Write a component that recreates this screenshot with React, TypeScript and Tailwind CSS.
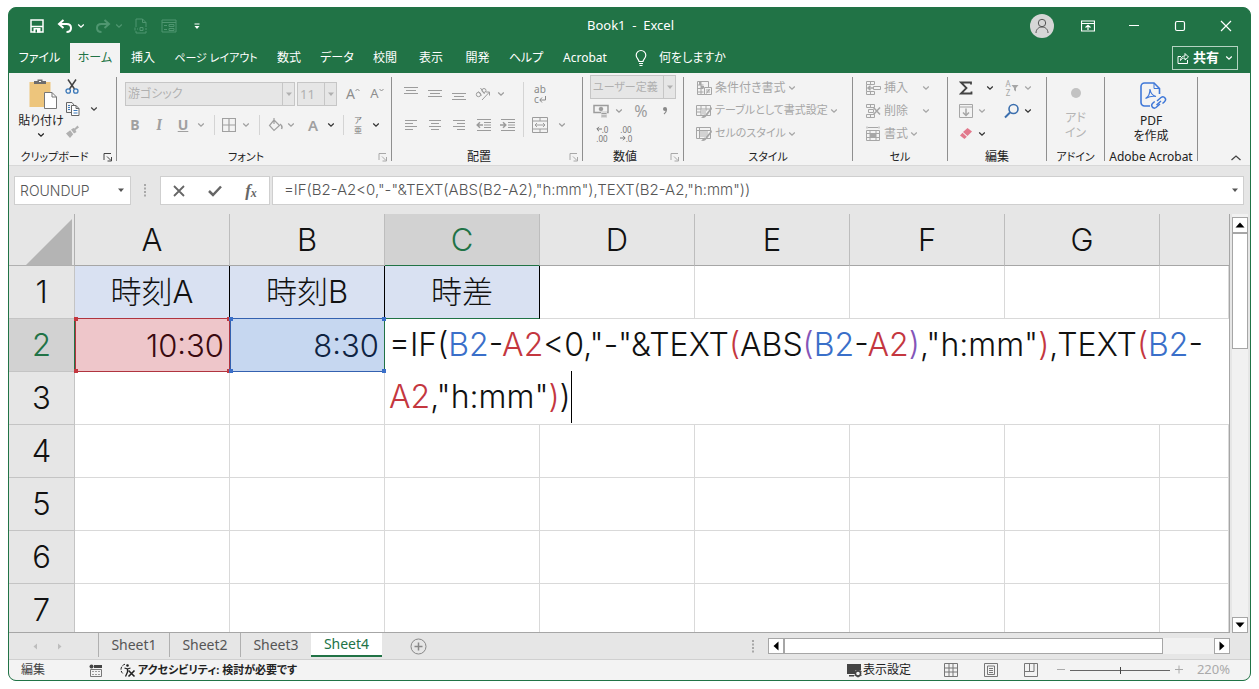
import type { ReactNode } from "react";
import clsx from "clsx";

const FORMULA = '=IF(B2-A2<0,"-"&TEXT(ABS(B2-A2),"h:mm"),TEXT(B2-A2,"h:mm"))';

const tabs = [
    { label: "ファイル", width: "w-[61px]" },
    { label: "ホーム", width: "w-[50px]", active: true },
    { label: "挿入", width: "w-[46px]" },
    { label: "ページ レイアウト", width: "w-[100px]", compact: true },
    { label: "数式", width: "w-[46px]" },
    { label: "データ", width: "w-[50px]" },
    { label: "校閲", width: "w-[46px]" },
    { label: "表示", width: "w-[46px]" },
    { label: "開発", width: "w-[47px]" },
    { label: "ヘルプ", width: "w-[50px]" },
    { label: "Acrobat", width: "w-[68px]" },
];

const columns = ["A", "B", "C", "D", "E", "F", "G", ""];
const emptyRows = [4, 5, 6, 7];
const sheets = ["Sheet1", "Sheet2", "Sheet3", "Sheet4"];

type IconProps = { w?: number; h?: number; className?: string; children: ReactNode };

const Icon = ({ w = 16, h = 16, className, children }: IconProps) => (
    <svg
        width={w}
        height={h}
        viewBox={`0 0 ${w} ${h}`}
        fill="none"
        stroke="currentColor"
        className={clsx("shrink-0", className)}
        aria-hidden="true"
    >
        {children}
    </svg>
);

const Chevron = ({ className }: { className?: string }) => (
    <Icon w={12} h={8} className={className}>
        <path d="M3.2 2.6 6 5.2l2.800-2.600" strokeWidth="1.300" />
    </Icon>
);

const Triangle = ({ className }: { className?: string }) => (
    <Icon w={8} h={5} className={className}>
        <path d="M1 .5h6L4 4z" fill="currentColor" stroke="none" />
    </Icon>
);

const ScrollArrow = ({ className }: { className?: string }) => (
    <Icon w={10} h={6} className={className}>
        <path d="M.5 .5h9L5 5.500z" fill="currentColor" stroke="none" />
    </Icon>
);

const Dots = ({ className }: { className?: string }) => (
    <Icon w={4} h={14} className={className}>
        <path d="M1 1h2v2H1zM1 4.500h2v2H1zM1 8h2v2H1zM1 11.500h2v2H1z" fill="currentColor" stroke="none" />
    </Icon>
);

type ToolProps = { label: string; className?: string; children: ReactNode };

const Tool = ({ label, className, children }: ToolProps) => (
    <button type="button" aria-label={label} className={clsx("flex shrink-0 items-center justify-center", className)}>
        {children}
    </button>
);

const More = ({ label, className }: { label: string; className?: string }) => (
    <Tool label={`${label}のオプション`} className={clsx("w-3", className)}>
        <Chevron />
    </Tool>
);

const Separator = ({ className }: { className?: string }) => (
    <div className={clsx("w-px shrink-0 self-stretch bg-[#d4d4d4]", className)} />
);

type GroupProps = { title: string; width: string; launcher?: string; compact?: boolean; children: ReactNode };

const Group = ({ title, width, launcher, compact, children }: GroupProps) => (
    <section className={clsx("flex shrink-0", width)} aria-label={title}>
        <div className="flex min-w-0 flex-1 flex-col">
            <div className="flex-1">{children}</div>
            <div className="flex h-4 items-center">
                <span
                    className={clsx(
                        "flex-1 text-center leading-4 whitespace-nowrap text-[#222]",
                        compact ? "text-[11px]" : "text-xs",
                    )}
                >
                    {title}
                </span>
                {launcher && (
                    <Tool label={`${title}の設定`} className={clsx("w-4", launcher)}>
                        <Icon w={10} h={10}>
                            <path d="M1 8V1.500h7M4 4.500l4 4M8.500 5v4H4.500" />
                        </Icon>
                    </Tool>
                )}
            </div>
        </div>
        <div className="mt-1 mb-1 w-px bg-[#8f8f8f]" />
    </section>
);

type ComboProps = { label: string; value: string; className: string };

const Combo = ({ label, value, className }: ComboProps) => (
    <div className={clsx("flex shrink-0 items-stretch border border-[#c6c6c6] bg-[#e6e6e6] text-[#b0b0b0]", className)}>
        <select aria-label={label} className="min-w-0 flex-1 appearance-none pl-0.5 leading-5 outline-none">
            <option>{value}</option>
        </select>
        <span className="flex w-3 shrink-0 items-center justify-center border-l border-[#c6c6c6]">
            <Triangle />
        </span>
    </div>
);

const TitleBar = () => (
    <header className="flex h-[35px] shrink-0 items-center text-white">
        <div className="flex flex-1 items-center pl-5">
            <Tool label="上書き保存" className="w-4">
                <Icon w={14} h={14}>
                    <path d="M1 1h12v12H1z" strokeWidth="1.500" />
                    <path d="M1 7.500h12" strokeWidth="1.300" />
                    <path d="M3.500 9h7v4.500h-7z" fill="currentColor" stroke="none" />
                    <path d="M5.500 10.500h1.500v3H5.500z" fill="#217346" stroke="none" />
                </Icon>
            </Tool>
            <Tool label="元に戻す" className="ml-3 w-4">
                <Icon w={16} h={14}>
                    <path d="M6.500 1 2 5l4.500 4M2 5h7.500c3 0 4.500 1.700 4.500 4s-1.500 4-4.500 4" strokeWidth="2" />
                </Icon>
            </Tool>
            <More label="元に戻す" className="ml-0.5" />
            <Tool label="やり直し" className="ml-2 w-4 text-[#4f9670]">
                <Icon w={16} h={14}>
                    <path d="M9.500 1 14 5l-4.500 4M14 5H6.500C3.500 5 2 6.700 2 9s1.500 4 4.500 4" strokeWidth="2" />
                </Icon>
            </Tool>
            <More label="やり直し" className="ml-0.5 text-[#4f9670]" />
            <Tool label="印刷プレビュー" className="ml-2 w-4 text-[#4f9670]">
                <Icon w={14} h={16}>
                    <path d="M2 9V1h6.500L12 4.500V9M8.500 1v3.500H12M2 13v2h10v-2M1 9.500v3M3 11h1M6 9.500h3v3H6zM11 11h2" />
                </Icon>
            </Tool>
            <Tool label="フォーム" className="ml-3 w-4 text-[#4f9670]">
                <Icon w={16} h={14}>
                    <path d="M1 1h14v12H1zM1 3.500h14M3 6.500h3M3 10.500h3M8 5.500h5v2H8zM8 9.500h5v2H8z" />
                </Icon>
            </Tool>
            <Tool label="クイック アクセス ツール バーのカスタマイズ" className="ml-3 w-4">
                <Icon w={8} h={8}>
                    <path d="M1.500 2h5" />
                    <path d="M1.500 4h5L4 7z" fill="currentColor" stroke="none" />
                </Icon>
            </Tool>
        </div>
        <h1 className="mr-1 text-[13px] whitespace-pre">Book1{"  "}-{"  "}Excel</h1>
        <div className="flex flex-1 items-center justify-end pr-[14px]">
            <Tool label="アカウント" className="h-6 w-6 rounded-full bg-[#d6d6d6] text-[#555]">
                <Icon w={16} h={16}>
                    <circle cx="8" cy="5" r="3.700" />
                    <path d="M2 15c0-3.500 2.500-6 6-6s6 2.500 6 6" />
                </Icon>
            </Tool>
            <Tool label="リボンの表示オプション" className="ml-6 w-5">
                <Icon w={14} h={12}>
                    <path d="M.5 1h13v10H.500zM.500 3.500h13M7 10V5.500M4.500 7.500 7 5.200l2.500 2.300" strokeWidth="1.200" />
                </Icon>
            </Tool>
            <Tool label="最小化" className="ml-[26px] w-5">
                <Icon w={12} h={12}>
                    <path d="M1 5.500h10" strokeWidth="1.200" />
                </Icon>
            </Tool>
            <Tool label="最大化" className="ml-[26px] w-5">
                <Icon w={12} h={12}>
                    <rect x="1.500" y="1.500" width="9" height="9" rx="1.500" strokeWidth="1.200" />
                </Icon>
            </Tool>
            <Tool label="閉じる" className="ml-[26px] w-5">
                <Icon w={12} h={12}>
                    <path d="m1 1 10 10M11 1 1 11" strokeWidth="1.200" />
                </Icon>
            </Tool>
        </div>
    </header>
);

const TabBar = () => (
    <nav className="flex h-[30px] shrink-0 items-stretch text-white">
        {tabs.map(({ label, width, active, compact }) => (
            <button
                key={label}
                type="button"
                className={clsx(
                    "flex shrink-0 items-center justify-center whitespace-nowrap",
                    compact ? "text-[11px]" : "text-xs",
                    width,
                    active && "bg-[#f3f3f3] text-[#217346]",
                )}
            >
                {label}
            </button>
        ))}
        <button type="button" className="ml-4 flex items-center gap-3 text-xs whitespace-nowrap">
            <Icon w={12} h={18}>
                <path d="M4 12.500c0-2-2.800-3-2.800-6.200a4.800 4.800 0 0 1 9.600 0c0 3.200-2.800 4.200-2.800 6.200zM4 14.500h4M4.500 16.500h3" strokeWidth="1.200" />
            </Icon>
            何をしますか
        </button>
        <button
            type="button"
            className="mr-3 ml-auto flex h-6 w-[66px] items-center gap-1 self-center border border-[#b5d3c2] pl-1 text-[13px] font-bold"
        >
            <Icon w={12} h={12}>
                <path d="M4 4.500H1v7h9.500V8M3.500 8.500c0-3 2-4.500 4.500-4.500V1.500l3.500 3.500L8 8V6C6 6 4.500 6.500 3.500 8.500z" />
            </Icon>
            <span className="whitespace-nowrap">共有</span>
            <Chevron />
        </button>
    </nav>
);

const ClipboardGroup = () => (
    <Group title="クリップボード" width="w-[108px]" launcher="text-[#444]" compact>
        <div className="flex pt-[5px] pl-2 text-[#444]">
            <button type="button" className="flex w-12 flex-col items-center text-xs whitespace-nowrap text-[#222]">
                <Icon w={30} h={32} className="ml-1">
                    <path d="M1.500 4h21v25h-21z" fill="#edc57c" stroke="none" />
                    <path d="M6 6V3h3.500V1.500h5V3H18v3z" fill="#6d6d6d" stroke="none" />
                    <path d="M11 3h2v1h-2z" fill="#fff" stroke="none" />
                    <path d="M16.500 14.500h7.500l4.500 4.500v11.500h-12z" fill="#fff" stroke="#777" />
                    <path d="M24 14.500V19h4.500" stroke="#777" />
                </Icon>
                <span className="mt-[3px] leading-4">貼り付け</span>
                <Chevron className="mt-0.5" />
            </button>
            <div className="-ml-px flex flex-col gap-[7px]">
                <Tool label="切り取り" className="h-4 w-4">
                    <Icon w={14} h={15}>
                        <path d="M3 .5 9.500 10M11 .5 4.500 10" strokeWidth="1.500" />
                        <circle cx="3.200" cy="12" r="2.200" stroke="#3b78b8" strokeWidth="1.300" />
                        <circle cx="10.800" cy="12" r="2.200" stroke="#3b78b8" strokeWidth="1.300" />
                    </Icon>
                </Tool>
                <Tool label="コピー" className="h-4 w-4">
                    <Icon w={15} h={16}>
                        <path d="M6 11.500H1.500v-10H7L9 4" stroke="#666" />
                        <path d="M6.500 4.500h4.500l3 3v7H6.500zM11 4.500v3h3" fill="#fff" stroke="#666" />
                        <path d="M3 4.500h2M3 6.500h2M3 8.500h2M8.500 9.500h4M8.500 12h4" stroke="#3b78b8" />
                    </Icon>
                </Tool>
                <Tool label="書式のコピー/貼り付け" className="h-4 w-4 text-[#b0b0b0]">
                    <Icon w={14} h={14}>
                        <path d="m12.500.5 1.500 2-3.500 2.500 1 2-2.500 1.500-3-4L8.500 3l1 .5zM5.200 5.200l3 4L5 13 1 8.500z" fill="currentColor" stroke="none" />
                    </Icon>
                </Tool>
            </div>
            <More label="コピー" className="ml-2 self-center" />
        </div>
    </Group>
);

const FontGroup = () => (
    <Group title="フォント" width="w-[275px]" launcher="text-[#a8a8a8]" compact>
        <div className="flex flex-col gap-[7px] pt-[9px] text-[#a0a0a0]">
            <div className="flex h-6 items-center pl-2">
                <Combo label="フォント" value="游ゴシック" className="h-6 w-[170px] text-xs" />
                <Combo label="フォント サイズ" value="11" className="ml-0.5 h-6 w-10 text-[13px]" />
                <Tool label="フォント サイズの拡大" className="ml-1 w-6 text-sm text-[#8e8e8e]">
                    A<Icon w={5} h={12}><path d="M.5 3 2.500 1l2 2" /></Icon>
                </Tool>
                <Tool label="フォント サイズの縮小" className="w-6 text-[13px] text-[#8e8e8e]">
                    A<Icon w={5} h={12}><path d="m.5 1 2 2 2-2" /></Icon>
                </Tool>
            </div>
            <div className="flex h-6 items-center pl-[6px]">
                <Tool label="太字" className="w-6 text-sm font-bold">B</Tool>
                <Tool label="斜体" className="w-6 font-serif text-[15px] font-bold italic">I</Tool>
                <Tool label="下線" className="w-6 text-sm font-bold underline">U</Tool>
                <More label="下線" />
                <Separator className="mx-[7px] my-0.5" />
                <Tool label="罫線" className="w-[14px]">
                    <Icon w={14} h={14}>
                        <path d="M.5.500h13v13H.500zM7 .5v13M.5 7h13" strokeWidth="1.200" />
                    </Icon>
                </Tool>
                <More label="罫線" className="ml-1" />
                <Separator className="mx-[7px] my-0.5" />
                <Tool label="塗りつぶしの色" className="w-4">
                    <Icon w={15} h={15}>
                        <path d="M6 2 1.500 7.500 6 12.500 11.500 7.500zM6 2V0M6 2v4" strokeWidth="1.200" />
                        <path d="M12 6c1.500 1 2.500 3 1.500 5" strokeWidth="1.500" />
                    </Icon>
                </Tool>
                <More label="塗りつぶしの色" className="ml-0.5" />
                <Tool label="フォントの色" className="ml-1 w-6 text-[15px] font-semibold">A</Tool>
                <More label="フォントの色" className="text-[#333]" />
                <Separator className="mx-[6px] my-0.5" />
                <Tool label="ふりがなの表示/非表示" className="w-4 flex-col text-[8px] leading-[10px] text-[#777]">
                    <span>ア</span>
                    <span>亜</span>
                </Tool>
                <More label="ふりがなの表示/非表示" className="ml-1 text-[#333]" />
            </div>
        </div>
    </Group>
);

const AlignmentGroup = () => (
    <Group title="配置" width="w-[191px]" launcher="text-[#a8a8a8]">
        <div className="flex pt-[9px] pl-[7px] text-[#9c9c9c]">
            <div className="flex w-[124px] flex-col gap-[7px]">
                <div className="flex h-6 items-center">
                    <Tool label="上揃え" className="w-6">
                        <Icon w={14} h={18}><path d="M0 2.500h14M2 5.500h10M0 8.500h14" /></Icon>
                    </Tool>
                    <Tool label="上下中央揃え" className="w-6">
                        <Icon w={14} h={18}><path d="M0 5.500h14M2 8.500h10M0 11.500h14" /></Icon>
                    </Tool>
                    <Tool label="下揃え" className="w-6">
                        <Icon w={14} h={18}><path d="M0 8.500h14M2 11.500h10M0 14.500h14" /></Icon>
                    </Tool>
                    <Tool label="方向" className="w-6">
                        <Icon w={16} h={16}>
                            <circle cx="3.500" cy="8.500" r="2.200" />
                            <path d="m3.500 5.500 3 4M5.500 2l4 6M7 14l7.500-8M11 6h3.500v3.500" />
                            <circle cx="9" cy="4.500" r="2" />
                        </Icon>
                    </Tool>
                    <More label="方向" />
                </div>
                <div className="flex h-6 items-center">
                    <Tool label="左揃え" className="w-6">
                        <Icon w={12} h={12}><path d="M0 1.500h12M0 4.500h8M0 7.500h12M0 10.500h8" /></Icon>
                    </Tool>
                    <Tool label="中央揃え" className="w-6">
                        <Icon w={12} h={12}><path d="M0 1.500h12M2 4.500h8M0 7.500h12M2 10.500h8" /></Icon>
                    </Tool>
                    <Tool label="右揃え" className="w-6">
                        <Icon w={12} h={12}><path d="M0 1.500h12M4 4.500h8M0 7.500h12M4 10.500h8" /></Icon>
                    </Tool>
                    <Tool label="インデントを減らす" className="w-6">
                        <Icon w={15} h={14}>
                            <path d="M1 1.500h14M8 4.500h7M8 7h7M8 9.500h7M1 12.500h14" />
                            <path d="M7 7H1.500M4 4.200 1.200 7 4 9.800" strokeWidth="1.500" />
                        </Icon>
                    </Tool>
                    <Tool label="インデントを増やす" className="w-6">
                        <Icon w={15} h={14}>
                            <path d="M1 1.500h14M8 4.500h7M8 7h7M8 9.500h7M1 12.500h14" />
                            <path d="M0 7h5.500M3 4.200 5.800 7 3 9.800" strokeWidth="1.500" />
                        </Icon>
                    </Tool>
                </div>
            </div>
            <Separator />
            <div className="flex flex-col gap-[7px]">
                <Tool label="折り返して全体を表示する" className="ml-1 h-6 w-6 flex-col text-[10px] leading-[10px] text-[#888]">
                    <span>ab</span>
                    <span className="flex items-center">
                        c
                        <Icon w={7} h={7}><path d="M6.500 0v4H1M3 1.500.800 4 3 6.500" /></Icon>
                    </span>
                </Tool>
                <div className="flex h-6 items-center pl-2">
                    <Tool label="セルを結合して中央揃え" className="w-4">
                        <Icon w={16} h={16}>
                            <path d="M.5.500h15v15H.500zM.500 4h15M.500 12h15M8 .500V4M8 12v3.500M3 8h10M5 6 3 8l2 2M11 6l2 2-2 2" />
                        </Icon>
                    </Tool>
                    <More label="セルを結合して中央揃え" className="ml-2" />
                </div>
            </div>
        </div>
    </Group>
);

const NumberGroup = () => (
    <Group title="数値" width="w-[101px]" launcher="text-[#a8a8a8]">
        <div className="flex flex-col pt-[2px] pl-[7px] text-[#9c9c9c]">
            <Combo label="表示形式" value="ユーザー定義" className="h-6 w-[86px] text-[11px]" />
            <div className="flex h-[23px] items-center pl-[3px]">
                <Tool label="通貨表示形式" className="w-4">
                    <Icon w={16} h={16}>
                        <path d="M1 2.500h14v7H1z" strokeWidth="1.500" />
                        <circle cx="8" cy="6" r="1.800" fill="currentColor" />
                        <path d="M8 9h6v6H8z" fill="#dcdcdc" stroke="none" />
                        <path d="M8.500 10.500h5M8.500 13h5" />
                    </Icon>
                </Tool>
                <More label="通貨表示形式" className="ml-1" />
                <Tool label="パーセント スタイル" className="ml-1 w-6 text-base">%</Tool>
                <Tool label="桁区切りスタイル" className="w-6 text-[#888]">
                    <Icon w={6} h={10}>
                        <circle cx="3" cy="3" r="2" fill="currentColor" stroke="none" />
                        <path d="M4.500 3c0 2.500-1 4-2.500 5" strokeWidth="1.300" />
                    </Icon>
                </Tool>
            </div>
            <div className="flex h-[23px] items-center gap-2 pl-1">
                <Tool label="小数点以下の表示桁数を増やす" className="w-4 flex-col text-[8px] leading-[9px] text-[#777]">
                    <span className="flex items-center">
                        <Icon w={6} h={6}><path d="M6 3H1M3 .8.800 3 3 5.200" /></Icon>.0
                    </span>
                    <span>.00</span>
                </Tool>
                <Tool label="小数点以下の表示桁数を減らす" className="w-4 flex-col text-[8px] leading-[9px] text-[#777]">
                    <span>.00</span>
                    <span className="flex items-center">
                        <Icon w={6} h={6}><path d="M0 3h5M3 .8 5.200 3 3 5.200" /></Icon>.0
                    </span>
                </Tool>
            </div>
        </div>
    </Group>
);

type RowButtonProps = { label: string; spread?: boolean; compact?: boolean; children: ReactNode };

const RowButton = ({ label, spread, compact, children }: RowButtonProps) => (
    <button
        type="button"
        className={clsx("flex h-[23px] items-center whitespace-nowrap text-[#a6a6a6]", compact ? "text-[11px]" : "text-xs")}
    >
        {children}
        <span className="ml-[3px]">{label}</span>
        <Chevron className={spread ? "ml-3" : "ml-0"} />
    </button>
);

const StyleGroup = () => (
    <Group title="スタイル" width="w-[169px]" compact>
        <div className="flex flex-col items-start pt-[3px] pl-3">
            <RowButton label="条件付き書式">
                <Icon>
                    <path d="M1.500 1.500h11v13h-11zM1.500 5h6M1.500 8.500h6M1.500 12h6M5 1.500v13" />
                    <path d="M3 2h2v3H3zM5 6h3v2H5z" fill="currentColor" stroke="none" />
                    <path d="M8.500 7.500h7v7h-7z" fill="#f3f3f3" />
                    <path d="M10 10h4M10 12h4M13.500 9l-3 4.500" />
                </Icon>
            </RowButton>
            <RowButton label="テーブルとして書式設定" compact>
                <Icon>
                    <path d="M.5 2.500h14v10H.500zM.500 6h14M.500 9h9M5 2.500v10M10 2.500V8" />
                    <path d="M5 6.500h5v5H5z" fill="#d2d2d2" stroke="none" />
                    <path d="m15.500 4-6 7.500 1.500 1 5-6.500zM9 11.500c-2 0-2 2.500-4 3 2.500 1 5 0 5.500-2z" fill="currentColor" stroke="none" />
                </Icon>
            </RowButton>
            <RowButton label="セルのスタイル" compact>
                <Icon>
                    <path d="M.5 1.500h14v11H.500zM.500 4.500h14M3.500 1.500v11" />
                    <path d="M4 5h8v6H4z" fill="#d2d2d2" stroke="none" />
                    <path d="m15.500 4-6 7.500 1.500 1 5-6.500zM9 11.500c-2 0-2 2.500-4 3 2.500 1 5 0 5.500-2z" fill="currentColor" stroke="none" />
                </Icon>
            </RowButton>
        </div>
    </Group>
);

const CellGroup = () => (
    <Group title="セル" width="w-[95px]" compact>
        <div className="flex flex-col items-start pt-[3px] pl-3">
            <RowButton label="挿入" spread>
                <Icon>
                    <path d="M1.500 1.500h8v3h-8zM5.500 1.500v3M1.500 11.500h8v3h-8zM5.500 11.500v3M1.500 4.500v7M8.500 6.500h7v3h-7z" />
                    <path d="M8 8H3M5.500 5.800 3 8l2.500 2.200" strokeWidth="1.500" />
                </Icon>
            </RowButton>
            <RowButton label="削除" spread>
                <Icon>
                    <path d="M1.500 1.500h8v3h-8zM5.500 1.500v3M1.500 11.500h8v3h-8zM5.500 11.500v3M3.500 6.500h5v3h-5z" />
                    <path d="m8.500 4.500 6.500 7M15 4.500l-6.500 7" strokeWidth="1.500" />
                </Icon>
            </RowButton>
            <RowButton label="書式">
                <Icon>
                    <path d="M1.500 4.500h13v10h-13zM1.500 7.500h13M1.500 11.500h13M5 4.500v10M11 4.500v10M2 .5v2M14 .5v2M3 1.500h10" />
                    <path d="M5 7.500h6v4H5z" fill="currentColor" stroke="none" />
                </Icon>
            </RowButton>
        </div>
    </Group>
);

const EditGroup = () => (
    <Group title="編集" width="w-[99px]">
        <div className="flex flex-col pt-[3px] pl-[10px] text-[#a6a6a6]">
            <div className="flex h-[23px] items-center">
                <Tool label="合計" className="w-4 text-[#444]">
                    <Icon w={14} h={14}>
                        <path d="M12 3.500V1.500H2L7.500 7 2 12.500h10.500v-2" strokeWidth="1.800" />
                    </Icon>
                </Tool>
                <More label="合計" className="ml-2.5 text-[#333]" />
                <Tool label="並べ替えとフィルター" className="ml-2 w-4">
                    <span className="flex flex-col text-[8px] leading-[9px]">
                        <span>A</span>
                        <span>Z</span>
                    </span>
                    <Icon w={8} h={8}><path d="M.5 1h7L5 4v3.500L3 6V4z" fill="currentColor" stroke="none" /></Icon>
                </Tool>
                <More label="並べ替えとフィルター" className="ml-0.5" />
            </div>
            <div className="flex h-[23px] items-center">
                <Tool label="フィル" className="w-4">
                    <Icon w={14} h={14}>
                        <path d="M.5.500h13v13H.500zM.500 3h13" />
                        <path d="M7 4.500v7M4 8.500l3 3 3-3" strokeWidth="1.500" />
                    </Icon>
                </Tool>
                <More label="フィル" className="ml-0.5" />
                <Tool label="検索と選択" className="ml-4 w-4">
                    <Icon w={16} h={16} className="text-[#3b6fae]">
                        <circle cx="9.500" cy="6" r="4.500" strokeWidth="1.600" />
                        <path d="M6 9.500 1 14.500" strokeWidth="2" />
                    </Icon>
                </Tool>
                <More label="検索と選択" className="ml-0.5 text-[#333]" />
            </div>
            <div className="flex h-[23px] items-center">
                <Tool label="クリア" className="w-4">
                    <Icon w={14} h={13}>
                        <path d="m8.500 1 4.500 3.500L8.500 9 4 5z" fill="#e2798c" stroke="none" />
                        <path d="m3.500 5.700 4.300 4L5.500 12 1 8.500z" fill="#e2798c" stroke="none" />
                    </Icon>
                </Tool>
                <More label="クリア" className="ml-0.5 text-[#333]" />
            </div>
        </div>
    </Group>
);

const Ribbon = () => (
    <div className="flex h-[93px] shrink-0 items-stretch border-b border-[#d8d8d8] bg-[#f3f3f3]">
        <div className="flex">
            <ClipboardGroup />
            <FontGroup />
            <AlignmentGroup />
            <NumberGroup />
            <StyleGroup />
            <CellGroup />
            <EditGroup />
            <Group title="アドイン" width="w-[58px]" compact>
                <button type="button" className="flex w-full flex-col items-center pt-[15px] text-xs leading-[15px] text-[#b5b5b5]">
                    <span className="mb-3 h-[10px] w-[10px] rounded-full bg-[#c2c2c2]" />
                    <span>アド</span>
                    <span>イン</span>
                </button>
            </Group>
            <Group title="Adobe Acrobat" width="w-[93px]">
                <button type="button" className="flex w-full flex-col items-center pt-2 text-xs leading-[15px] text-[#222]">
                    <Icon w={28} h={30} className="mb-0.5 ml-1 text-[#3f78d8]">
                        <path d="M11 25H5.500A3.500 3.500 0 0 1 2 21.500v-16A3.500 3.500 0 0 1 5.500 2H15l5.500 5.500V13" strokeWidth="1.600" />
                        <path d="M15 2v5.500h5.500" strokeWidth="1" />
                        <path d="M6.500 17.500c3-1.500 4.500-5 4.500-9.500.5 4.500 2.500 6.500 6 7.500-4-.8-7 .2-10.500 2z" strokeWidth="1.200" />
                        <path d="m18 20 4-3.500c1.500-1 3-.8 4 .5s.8 2.500-.5 3.700l-2 1.800M21 23l-4 3.500c-1.300 1-2.700.8-3.700-.5s-.8-2.500.4-3.700l2-1.800M17.500 24l4.500-4" strokeWidth="1.500" />
                    </Icon>
                    <span>PDF</span>
                    <span>を作成</span>
                </button>
            </Group>
        </div>
        <div className="flex flex-1 items-end justify-end pr-[6px] pb-[3px]">
            <Tool label="リボンを折りたたむ" className="w-4">
                <Icon w={12} h={8} className="text-[#444]"><path d="m1.500 6 4.500-4 4.500 4" strokeWidth="1.300" /></Icon>
            </Tool>
        </div>
    </div>
);

const FormulaBar = () => (
    <div className="flex h-12 shrink-0 items-start bg-[#e6e6e6] pt-[10px] pr-[6px] pl-[5px] font-['Inter','Noto_Sans_CJK_JP',sans-serif]">
        <div className="flex h-[29px] w-[117px] items-center border border-[#cfcfcf] bg-white text-[#555]">
            <input
                aria-label="名前ボックス"
                defaultValue="ROUNDUP"
                className="min-w-0 flex-1 bg-transparent pl-[5px] text-sm font-light outline-none"
            />
            <Triangle className="mr-[5px]" />
        </div>
        <Dots className="mx-3 mt-[7px] text-[#a8a8a8]" />
        <div className="ml-px flex h-[29px] w-[110px] items-center border border-[#cfcfcf] bg-white text-[#666]">
            <Tool label="キャンセル" className="w-9">
                <Icon w={12} h={12}><path d="m1 1 10 10M11 1 1 11" strokeWidth="1.800" /></Icon>
            </Tool>
            <Tool label="入力" className="w-9">
                <Icon w={14} h={12}><path d="m1 6 4 4 8-8.500" strokeWidth="2.500" /></Icon>
            </Tool>
            <Tool label="関数の挿入" className="w-9 font-['Liberation_Serif',serif] text-[17px] font-bold italic">
                f<span className="mt-1 text-xs">x</span>
            </Tool>
        </div>
        <div className="ml-0.5 flex h-[29px] min-w-0 flex-1 items-center border border-[#cfcfcf] bg-white text-[#555]">
            <input
                aria-label="数式バー"
                defaultValue={FORMULA}
                className="min-w-0 flex-1 bg-transparent pl-[11px] text-[15px] font-light outline-none"
            />
            <Triangle className="mr-1" />
        </div>
    </div>
);

const cellBase = "border-r border-b border-[#d9d9d9]";

type RowHeadProps = { row: number; active?: boolean };

const RowHead = ({ row, active }: RowHeadProps) => (
    <th
        scope="row"
        className={clsx(
            "border-r border-b p-0 font-light",
            active ? "border-r-[#217346] border-b-[#c4c4c4] bg-[#d2d2d2] text-[#217346]" : "border-[#c4c4c4] bg-[#e6e6e6]",
        )}
    >
        {row}
    </th>
);

type RangeProps = { box: string; handle: string };

// Coloured outline drawn round a cell that the formula refers to
const RangeOutline = ({ box, handle }: RangeProps) => (
    <span className={clsx("pointer-events-none absolute -top-px right-0 bottom-0 left-0 border", box)}>
        <span className={clsx("absolute -top-[2px] -left-[2px] h-1 w-1", handle)} />
        <span className={clsx("absolute -top-[2px] -right-[2px] h-1 w-1", handle)} />
        <span className={clsx("absolute -bottom-[2px] -left-[2px] h-1 w-1", handle)} />
        <span className={clsx("absolute -right-[2px] -bottom-[2px] h-1 w-1", handle)} />
    </span>
);

const Blue = ({ children }: { children: ReactNode }) => <span className="text-[#3a6fc9]">{children}</span>;
const Red = ({ children }: { children: ReactNode }) => <span className="text-[#c4373f]">{children}</span>;
const Purple = ({ children }: { children: ReactNode }) => <span className="text-[#8455b8]">{children}</span>;

const EditedFormula = () => (
    <>
        =IF(<Blue>B2</Blue>-<Red>A2</Red>&lt;0,"-"&amp;TEXT<Red>(</Red>ABS<Purple>(</Purple>
        <Blue>B2</Blue>-<Red>A2</Red>
        <Purple>)</Purple>,"h:mm"<Red>)</Red>,TEXT<Red>(</Red>
        <Blue>B2</Blue>-<br />
        <Red>A2</Red>,"h:mm"<Red>)</Red>)
        <span className="inline-block h-[52px] w-px bg-black align-top" />
    </>
);

const headCell = "border-r border-b border-r-black border-b-[#3d5f9c] bg-[#d9e1f2] p-0 text-center font-light";

const Grid = () => (
    <div className="flex min-h-0 flex-1 bg-[#e6e6e6]">
        <div className="min-w-0 flex-1 overflow-hidden border-r border-b border-[#a6a6a6]">
            <table className="w-full table-fixed border-separate border-spacing-0 bg-white font-['Inter','Noto_Sans_CJK_JP',sans-serif] text-[31px] leading-[44px] font-light text-[#111]">
                <colgroup>
                    <col className="w-[66px]" />
                    {columns.map((name) => (
                        <col key={name} className={name ? "w-[155px]" : undefined} />
                    ))}
                </colgroup>
                <thead>
                    <tr className="h-[52px]">
                        <th className="border-r border-b border-[#b0b0b0] bg-[#e6e6e6] p-0" aria-label="すべて選択">
                            <Icon w={46} h={46} className="mt-1 mr-[2px] ml-auto">
                                <path d="M46 0v46H0z" fill="#b4b4b4" stroke="none" />
                            </Icon>
                        </th>
                        {columns.map((name) => (
                            <th
                                key={name}
                                scope="col"
                                className={clsx(
                                    "border-r border-b border-r-[#bdbdbd] p-0 font-light",
                                    name === "C"
                                        ? "border-b-[#217346] bg-[#d2d2d2] text-[#217346]"
                                        : "border-b-[#a6a6a6] bg-[#e6e6e6]",
                                    !name && "border-r-0",
                                )}
                            >
                                {name}
                            </th>
                        ))}
                    </tr>
                </thead>
                <tbody>
                    <tr className="h-[53px]">
                        <RowHead row={1} />
                        <td className={headCell}>時刻A</td>
                        <td className={headCell}>時刻B</td>
                        <td className={clsx(headCell, "border-b-[#217346]")}>時差</td>
                        {columns.slice(3).map((name) => (
                            <td key={name} className={cellBase} />
                        ))}
                    </tr>
                    <tr className="h-[53px]">
                        <RowHead row={2} active />
                        <td className="relative bg-[#eec6ca] p-0 pr-[6px] text-right text-[#3a0a10]">
                            10:30
                            <RangeOutline box="border-[#b0343f]" handle="bg-[#c4373f]" />
                        </td>
                        <td className="relative bg-[#c6d7f0] p-0 pr-[6px] text-right text-[#0f2342]">
                            8:30
                            <RangeOutline box="border-[#3461b0] border-r-[#217346]" handle="bg-[#3a6fc9]" />
                        </td>
                        <td colSpan={6} rowSpan={2} className="border-b border-[#d9d9d9] p-0 pl-1 align-top text-[32px] leading-[52px] whitespace-nowrap">
                            <EditedFormula />
                        </td>
                    </tr>
                    <tr className="h-[53px]">
                        <RowHead row={3} />
                        <td className={cellBase} />
                        <td className={cellBase} />
                    </tr>
                    {emptyRows.map((row) => (
                        <tr key={row} className="h-[53px]">
                            <RowHead row={row} />
                            {columns.map((name) => (
                                <td key={name} className={cellBase} />
                            ))}
                        </tr>
                    ))}
                </tbody>
            </table>
        </div>
        <div className="mr-0.5 ml-0.5 flex w-4 flex-col bg-[#f1f1f1] pt-[3px]">
            <Tool label="上へスクロール" className="h-4 border border-[#a6a6a6] bg-white text-black">
                <ScrollArrow className="rotate-180" />
            </Tool>
            <div className="h-[116px] border border-[#a6a6a6] bg-white" />
            <Tool label="下へスクロール" className="mt-auto h-4 border border-[#a6a6a6] bg-white text-black">
                <ScrollArrow />
            </Tool>
        </div>
    </div>
);

const SheetBar = () => (
    <div className="flex h-[26px] shrink-0 items-center bg-[#e6e6e6]">
        <div className="flex w-[89px] items-center gap-[17px] pl-[22px] text-[#bdbdbd]">
            <Tool label="前のシート"><Triangle className="rotate-90" /></Tool>
            <Tool label="次のシート"><Triangle className="-rotate-90" /></Tool>
        </div>
        <div className="flex h-full items-start">
            {sheets.map((name) => (
                <button
                    key={name}
                    type="button"
                    className={clsx(
                        "flex h-6 w-[71px] items-center justify-center text-sm",
                        name === "Sheet4"
                            ? "border-b-2 border-[#217346] bg-white text-[#217346]"
                            : "border-l border-[#b0b0b0] text-[#555]",
                    )}
                >
                    {name}
                </button>
            ))}
        </div>
        <Tool label="新しいシート" className="ml-7 text-[#888]">
            <Icon w={17} h={17}>
                <circle cx="8.500" cy="8.500" r="7.500" />
                <path d="M8.500 4.500v8M4.500 8.500h8" strokeWidth="1.500" />
            </Icon>
        </Tool>
        <Dots className="mr-[13px] ml-auto text-[#a8a8a8]" />
        <div className="mr-5 flex h-4 w-[38%] max-w-[462px] items-stretch bg-[#f1f1f1]">
            <Tool label="左へスクロール" className="w-4 border border-[#a6a6a6] bg-white text-black">
                <ScrollArrow className="rotate-90" />
            </Tool>
            <div className="w-[82%] border border-[#a6a6a6] bg-white" />
            <Tool label="右へスクロール" className="ml-auto w-4 border border-[#a6a6a6] bg-white text-black">
                <ScrollArrow className="-rotate-90" />
            </Tool>
        </div>
    </div>
);

const StatusBar = () => (
    <footer className="flex h-[21px] shrink-0 items-center border-t border-[#d0d0d0] bg-[#f3f3f3] text-xs text-[#444]">
        <span className="w-20 pl-3 whitespace-nowrap">編集</span>
        <Icon w={14} h={13}>
            <path d="M1.500 5.500h11v7h-11z" stroke="#777" />
            <path d="M5 1h8v3H5zM3.500 7h1v1h-1zM6.500 7h1v1h-1zM9.500 7h1v1h-1zM3.500 10h1v1h-1zM6.500 10h1v1h-1zM9.500 10h1v1h-1z" fill="currentColor" stroke="none" />
            <circle cx="2.500" cy="2.500" r="2" fill="currentColor" stroke="none" />
        </Icon>
        <button type="button" className="ml-[17px] flex items-center gap-0.5 text-[11px] font-bold whitespace-nowrap text-[#222]">
            <Icon w={16} h={15}>
                <path d="M5 1.200C2.500 2 1 4 1 6.500c0 2 1 3.500 2.500 4.500" strokeDasharray="3 1.200" />
                <circle cx="7.500" cy="2.500" r="1.300" fill="currentColor" stroke="none" />
                <path d="m4.500 5 3 1v3l-2 4.500M10.500 5l-3 1" strokeWidth="1.300" />
                <path d="m8.500 7.500 6 6M14.500 7.500l-6 6" strokeWidth="1.600" />
            </Icon>
            アクセシビリティ: 検討が必要です
        </button>
        <button type="button" className="ml-auto flex items-center whitespace-nowrap text-[#222]">
            <Icon w={17} h={15}>
                <path d="M1 1h14v6.500H9V11H1zM3 12h5v1.500H3z" fill="#444" stroke="none" />
                <circle cx="12" cy="10.500" r="2.600" stroke="#444" strokeWidth="1.600" />
                <path d="M12 6.500v8M8.500 8.500l7 4M15.500 8.500l-7 4" stroke="#444" strokeDasharray="1.500 5" />
            </Icon>
            表示設定
        </button>
        <div className="ml-[33px] flex items-center gap-[26px] text-[#777]">
            <Tool label="標準">
                <Icon w={14} h={14}><path d="M.5.500h13v13H.500zM.500 5h13M.500 9h13M5 .500v13M9 .500v13" /></Icon>
            </Tool>
            <Tool label="ページ レイアウト">
                <Icon w={14} h={14}><path d="M.5.500h13v13H.500zM3.500 3h7v8.500h-7zM5 5.500h4M5 7.500h4M5 9.500h4" /></Icon>
            </Tool>
            <Tool label="改ページ プレビュー">
                <Icon w={14} h={14}><path d="M.5.500h13v13H.500zM1 8.500h9M5.500 .500v8M10 .500v8" /></Icon>
            </Tool>
        </div>
        <Tool label="縮小" className="ml-[18px] text-[#aaa]">
            <Icon w={10} h={10}><path d="M1 4.500h8" /></Icon>
        </Tool>
        <input
            type="range"
            aria-label="ズーム"
            defaultValue={50}
            className="mx-1 h-px w-[100px] appearance-none bg-[#666] [&::-webkit-slider-thumb]:h-[7px] [&::-webkit-slider-thumb]:w-px [&::-webkit-slider-thumb]:appearance-none [&::-webkit-slider-thumb]:bg-[#444]"
        />
        <Tool label="拡大" className="text-[#aaa]">
            <Icon w={10} h={10}><path d="M1 4.500h8M5 .500v8" /></Icon>
        </Tool>
        <span className="w-[66px] pr-5 text-right text-[13px] text-[#aaa]">220%</span>
    </footer>
);

const App = () => (
    <div className="h-screen bg-white pt-[7px] pr-2 pb-2 pl-2 font-['Noto_Sans','Noto_Sans_CJK_JP',sans-serif] [font-feature-settings:'palt']">
        <div className="flex h-full flex-col overflow-hidden rounded-lg border border-[#217346] bg-[#217346]">
            <TitleBar />
            <TabBar />
            <Ribbon />
            <FormulaBar />
            <Grid />
            <SheetBar />
            <StatusBar />
        </div>
    </div>
);

export default App;
